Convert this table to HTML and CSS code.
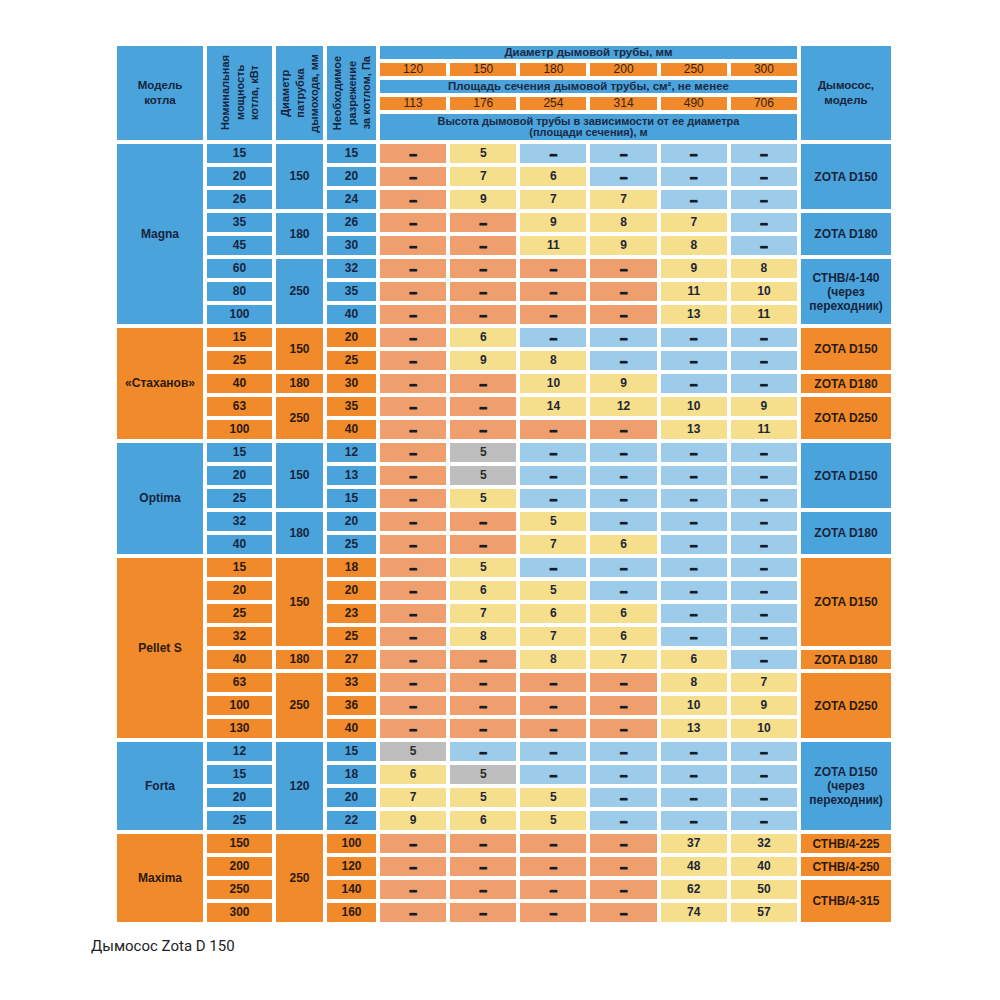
FILE: index.html
```html
<!DOCTYPE html>
<html lang="ru">
<head>
<meta charset="utf-8">
<title>Дымосос Zota D 150</title>
<link rel="stylesheet" href="styles.css">
</head>
<body>
<div class="page">
<div class="tbl">
  <!-- header -->
  <div class="c bl r5 hm">Модель<br>котла</div>
  <div class="c bl r5 hv"><span>Номинальная<br>мощность<br>котла, кВт</span></div>
  <div class="c bl r5 hv"><span>Диаметр<br>патрубка<br>дымохода, мм</span></div>
  <div class="c bl r5 hv"><span>Необходимое<br>разрежение<br>за котлом, Па</span></div>
  <div class="c bl c6 hs">Диаметр дымовой трубы, мм</div>
  <div class="c bl r5 hm">Дымосос,<br>модель</div>
  <div class="c or hn">120</div><div class="c or hn">150</div><div class="c or hn">180</div><div class="c or hn">200</div><div class="c or hn">250</div><div class="c or hn">300</div>
  <div class="c bl c6 hs">Площадь сечения дымовой трубы, см², не менее</div>
  <div class="c or hn">113</div><div class="c or hn">176</div><div class="c or hn">254</div><div class="c or hn">314</div><div class="c or hn">490</div><div class="c or hn">706</div>
  <div class="c bl c6 hs hh">Высота дымовой трубы в зависимости от ее диаметра<br>(площади сечения), м</div>

  <!-- Magna -->
  <div class="c bl r8 mdl">Magna</div>
  <div class="c bl">15</div><div class="c bl r3">150</div><div class="c bl">15</div>
  <div class="c s x">–</div><div class="c y">5</div><div class="c b x">–</div><div class="c b x">–</div><div class="c b x">–</div><div class="c b x">–</div>
  <div class="c bl r3 rt">ZOTA D150</div>
  <div class="c bl">20</div><div class="c bl">20</div>
  <div class="c s x">–</div><div class="c y">7</div><div class="c y">6</div><div class="c b x">–</div><div class="c b x">–</div><div class="c b x">–</div>
  <div class="c bl">26</div><div class="c bl">24</div>
  <div class="c s x">–</div><div class="c y">9</div><div class="c y">7</div><div class="c y">7</div><div class="c b x">–</div><div class="c b x">–</div>
  <div class="c bl">35</div><div class="c bl r2">180</div><div class="c bl">26</div>
  <div class="c s x">–</div><div class="c s x">–</div><div class="c y">9</div><div class="c y">8</div><div class="c y">7</div><div class="c b x">–</div>
  <div class="c bl r2 rt">ZOTA D180</div>
  <div class="c bl">45</div><div class="c bl">30</div>
  <div class="c s x">–</div><div class="c s x">–</div><div class="c y">11</div><div class="c y">9</div><div class="c y">8</div><div class="c b x">–</div>
  <div class="c bl">60</div><div class="c bl r3">250</div><div class="c bl">32</div>
  <div class="c s x">–</div><div class="c s x">–</div><div class="c s x">–</div><div class="c s x">–</div><div class="c y">9</div><div class="c y">8</div>
  <div class="c bl r3 rt">СТНВ/4-140<br>(через<br>переходник)</div>
  <div class="c bl">80</div><div class="c bl">35</div>
  <div class="c s x">–</div><div class="c s x">–</div><div class="c s x">–</div><div class="c s x">–</div><div class="c y">11</div><div class="c y">10</div>
  <div class="c bl">100</div><div class="c bl">40</div>
  <div class="c s x">–</div><div class="c s x">–</div><div class="c s x">–</div><div class="c s x">–</div><div class="c y">13</div><div class="c y">11</div>

  <!-- Стаханов -->
  <div class="c or r5 mdl">«Стаханов»</div>
  <div class="c or">15</div><div class="c or r2">150</div><div class="c or">20</div>
  <div class="c s x">–</div><div class="c y">6</div><div class="c b x">–</div><div class="c b x">–</div><div class="c b x">–</div><div class="c b x">–</div>
  <div class="c or r2 rt">ZOTA D150</div>
  <div class="c or">25</div><div class="c or">25</div>
  <div class="c s x">–</div><div class="c y">9</div><div class="c y">8</div><div class="c b x">–</div><div class="c b x">–</div><div class="c b x">–</div>
  <div class="c or">40</div><div class="c or">180</div><div class="c or">30</div>
  <div class="c s x">–</div><div class="c s x">–</div><div class="c y">10</div><div class="c y">9</div><div class="c b x">–</div><div class="c b x">–</div>
  <div class="c or rt">ZOTA D180</div>
  <div class="c or">63</div><div class="c or r2">250</div><div class="c or">35</div>
  <div class="c s x">–</div><div class="c s x">–</div><div class="c y">14</div><div class="c y">12</div><div class="c y">10</div><div class="c y">9</div>
  <div class="c or r2 rt">ZOTA D250</div>
  <div class="c or">100</div><div class="c or">40</div>
  <div class="c s x">–</div><div class="c s x">–</div><div class="c s x">–</div><div class="c s x">–</div><div class="c y">13</div><div class="c y">11</div>

  <!-- Optima -->
  <div class="c bl r5 mdl">Optima</div>
  <div class="c bl">15</div><div class="c bl r3">150</div><div class="c bl">12</div>
  <div class="c s x">–</div><div class="c g">5</div><div class="c b x">–</div><div class="c b x">–</div><div class="c b x">–</div><div class="c b x">–</div>
  <div class="c bl r3 rt">ZOTA D150</div>
  <div class="c bl">20</div><div class="c bl">13</div>
  <div class="c s x">–</div><div class="c g">5</div><div class="c b x">–</div><div class="c b x">–</div><div class="c b x">–</div><div class="c b x">–</div>
  <div class="c bl">25</div><div class="c bl">15</div>
  <div class="c s x">–</div><div class="c y">5</div><div class="c b x">–</div><div class="c b x">–</div><div class="c b x">–</div><div class="c b x">–</div>
  <div class="c bl">32</div><div class="c bl r2">180</div><div class="c bl">20</div>
  <div class="c s x">–</div><div class="c s x">–</div><div class="c y">5</div><div class="c b x">–</div><div class="c b x">–</div><div class="c b x">–</div>
  <div class="c bl r2 rt">ZOTA D180</div>
  <div class="c bl">40</div><div class="c bl">25</div>
  <div class="c s x">–</div><div class="c s x">–</div><div class="c y">7</div><div class="c y">6</div><div class="c b x">–</div><div class="c b x">–</div>

  <!-- Pellet S -->
  <div class="c or r8 mdl">Pellet S</div>
  <div class="c or">15</div><div class="c or r4">150</div><div class="c or">18</div>
  <div class="c s x">–</div><div class="c y">5</div><div class="c b x">–</div><div class="c b x">–</div><div class="c b x">–</div><div class="c b x">–</div>
  <div class="c or r4 rt">ZOTA D150</div>
  <div class="c or">20</div><div class="c or">20</div>
  <div class="c s x">–</div><div class="c y">6</div><div class="c y">5</div><div class="c b x">–</div><div class="c b x">–</div><div class="c b x">–</div>
  <div class="c or">25</div><div class="c or">23</div>
  <div class="c s x">–</div><div class="c y">7</div><div class="c y">6</div><div class="c y">6</div><div class="c b x">–</div><div class="c b x">–</div>
  <div class="c or">32</div><div class="c or">25</div>
  <div class="c s x">–</div><div class="c y">8</div><div class="c y">7</div><div class="c y">6</div><div class="c b x">–</div><div class="c b x">–</div>
  <div class="c or">40</div><div class="c or">180</div><div class="c or">27</div>
  <div class="c s x">–</div><div class="c s x">–</div><div class="c y">8</div><div class="c y">7</div><div class="c y">6</div><div class="c b x">–</div>
  <div class="c or rt">ZOTA D180</div>
  <div class="c or">63</div><div class="c or r3">250</div><div class="c or">33</div>
  <div class="c s x">–</div><div class="c s x">–</div><div class="c s x">–</div><div class="c s x">–</div><div class="c y">8</div><div class="c y">7</div>
  <div class="c or r3 rt">ZOTA D250</div>
  <div class="c or">100</div><div class="c or">36</div>
  <div class="c s x">–</div><div class="c s x">–</div><div class="c s x">–</div><div class="c s x">–</div><div class="c y">10</div><div class="c y">9</div>
  <div class="c or">130</div><div class="c or">40</div>
  <div class="c s x">–</div><div class="c s x">–</div><div class="c s x">–</div><div class="c s x">–</div><div class="c y">13</div><div class="c y">10</div>

  <!-- Forta -->
  <div class="c bl r4 mdl">Forta</div>
  <div class="c bl">12</div><div class="c bl r4">120</div><div class="c bl">15</div>
  <div class="c g">5</div><div class="c b x">–</div><div class="c b x">–</div><div class="c b x">–</div><div class="c b x">–</div><div class="c b x">–</div>
  <div class="c bl r4 rt">ZOTA D150<br>(через<br>переходник)</div>
  <div class="c bl">15</div><div class="c bl">18</div>
  <div class="c y">6</div><div class="c g">5</div><div class="c b x">–</div><div class="c b x">–</div><div class="c b x">–</div><div class="c b x">–</div>
  <div class="c bl">20</div><div class="c bl">20</div>
  <div class="c y">7</div><div class="c y">5</div><div class="c y">5</div><div class="c b x">–</div><div class="c b x">–</div><div class="c b x">–</div>
  <div class="c bl">25</div><div class="c bl">22</div>
  <div class="c y">9</div><div class="c y">6</div><div class="c y">5</div><div class="c b x">–</div><div class="c b x">–</div><div class="c b x">–</div>

  <!-- Maxima -->
  <div class="c or r4 mdl">Maxima</div>
  <div class="c or">150</div><div class="c or r4">250</div><div class="c or">100</div>
  <div class="c s x">–</div><div class="c s x">–</div><div class="c s x">–</div><div class="c s x">–</div><div class="c y">37</div><div class="c y">32</div>
  <div class="c or rt">СТНВ/4-225</div>
  <div class="c or">200</div><div class="c or">120</div>
  <div class="c s x">–</div><div class="c s x">–</div><div class="c s x">–</div><div class="c s x">–</div><div class="c y">48</div><div class="c y">40</div>
  <div class="c or rt">СТНВ/4-250</div>
  <div class="c or">250</div><div class="c or">140</div>
  <div class="c s x">–</div><div class="c s x">–</div><div class="c s x">–</div><div class="c s x">–</div><div class="c y">62</div><div class="c y">50</div>
  <div class="c or r2 rt">СТНВ/4-315</div>
  <div class="c or">300</div><div class="c or">160</div>
  <div class="c s x">–</div><div class="c s x">–</div><div class="c s x">–</div><div class="c s x">–</div><div class="c y">74</div><div class="c y">57</div>
</div>
<p class="caption">Дымосос Zota D 150</p>
</div>
</body>
</html>
```

FILE: styles.css
```css
html, body {
  margin: 0;
  padding: 0;
  background: #ffffff;
}
.page {
  padding-top: 46px;
}
.tbl {
  margin-left: 117px;
  width: 774px;
  display: grid;
  grid-template-columns: 86px 65px 47px 49px repeat(6, 1fr) 90px;
  grid-template-rows: 13px 13px 13px 13px 26px;
  grid-auto-rows: 19px;
  gap: 4px;
  font-family: "Liberation Sans", Arial, sans-serif;
  font-weight: 700;
  font-size: 12px;
  color: #1d2636;
}
.c {
  display: flex;
  align-items: center;
  justify-content: center;
  text-align: center;
  line-height: 13px;
}
.bl { background: #4ba3dc; color: #16253d; }
.or { background: #f08a2b; color: #2d1a0c; }
.s { background: #ef9f6e; }
.y { background: #f5df8d; }
.b { background: #9dcbea; }
.g { background: #bdbdbd; color: #2b2b2b; }
.x {
  font-size: 15px;
  color: #141c2a;
  text-shadow: 0 1px 0 #141c2a, 0 0.5px 0 #141c2a;
  padding-bottom: 1px;
}
.r2 { grid-row: span 2; }
.r3 { grid-row: span 3; }
.r4 { grid-row: span 4; }
.r5 { grid-row: span 5; }
.r8 { grid-row: span 8; }
.c6 { grid-column: span 6; }
.hm { font-size: 11.5px; line-height: 15px; }
.hv span {
  writing-mode: vertical-rl;
  transform: rotate(180deg);
  font-size: 11px;
  line-height: 14.5px;
  text-align: center;
}
.hs { font-size: 11.5px; font-weight: 700; color: #1b2a44; }
.hh { font-size: 11px; line-height: 11px; }
.hn { font-size: 12px; font-weight: 400; color: #3a220e; }
.mdl { font-size: 12px; }
.rt { font-size: 12px; line-height: 14px; }
.caption {
  margin: 15px 0 0 91px;
  font-family: Roboto, "Noto Sans", sans-serif;
  font-size: 15px;
  line-height: 18px;
  color: #222222;
}
```
